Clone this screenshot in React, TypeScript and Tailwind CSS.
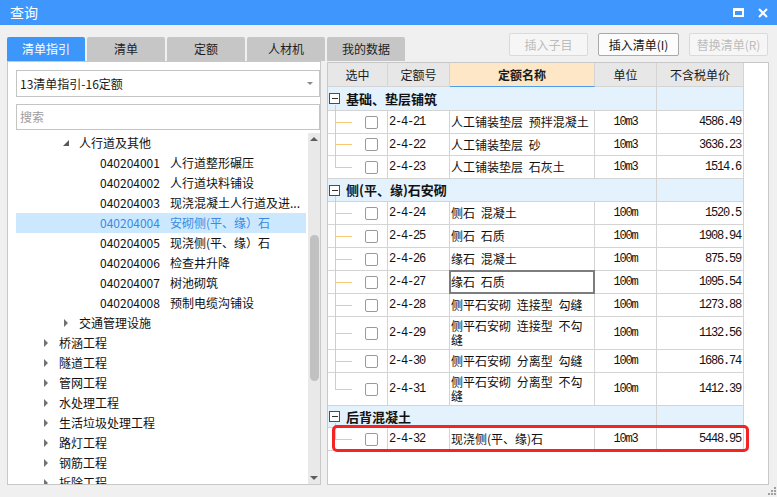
import React from "react";

type TreeItem = {
  lvl: 0 | 1 | 2;
  text: string;
  code?: string;
  open?: boolean;
  selected?: boolean;
};

const treeItems: TreeItem[] = [
  { lvl: 1, text: "人行道及其他", open: true },
  { lvl: 2, code: "040204001", text: "人行道整形碾压" },
  { lvl: 2, code: "040204002", text: "人行道块料铺设" },
  { lvl: 2, code: "040204003", text: "现浇混凝土人行道及进..." },
  { lvl: 2, code: "040204004", text: "安砌侧(平、缘）石", selected: true },
  { lvl: 2, code: "040204005", text: "现浇侧(平、缘）石" },
  { lvl: 2, code: "040204006", text: "检查井升降" },
  { lvl: 2, code: "040204007", text: "树池砌筑" },
  { lvl: 2, code: "040204008", text: "预制电缆沟铺设" },
  { lvl: 1, text: "交通管理设施" },
  { lvl: 0, text: "桥涵工程" },
  { lvl: 0, text: "隧道工程" },
  { lvl: 0, text: "管网工程" },
  { lvl: 0, text: "水处理工程" },
  { lvl: 0, text: "生活垃圾处理工程" },
  { lvl: 0, text: "路灯工程" },
  { lvl: 0, text: "钢筋工程" },
  { lvl: 0, text: "拆除工程" },
];

type Row =
  | { kind: "group"; title: string; h: number }
  | {
      kind: "item";
      code: string;
      name: string;
      unit: string;
      price: string;
      h: number;
      last?: boolean;
      active?: boolean;
    };

const rows: Row[] = [
  { kind: "group", title: "基础、垫层铺筑", h: 24 },
  { kind: "item", code: "2-4-21", name: "人工铺装垫层 预拌混凝土", unit: "10m3", price: "4586.49", h: 23 },
  { kind: "item", code: "2-4-22", name: "人工铺装垫层 砂", unit: "10m3", price: "3636.23", h: 22 },
  { kind: "item", code: "2-4-23", name: "人工铺装垫层 石灰土", unit: "10m3", price: "1514.6", h: 23, last: true },
  { kind: "group", title: "侧(平、缘)石安砌", h: 23 },
  { kind: "item", code: "2-4-24", name: "侧石 混凝土", unit: "100m", price: "1520.5", h: 23 },
  { kind: "item", code: "2-4-25", name: "侧石 石质", unit: "100m", price: "1908.94", h: 23 },
  { kind: "item", code: "2-4-26", name: "缘石 混凝土", unit: "100m", price: "875.59", h: 23 },
  { kind: "item", code: "2-4-27", name: "缘石 石质", unit: "100m", price: "1095.54", h: 23, active: true },
  { kind: "item", code: "2-4-28", name: "侧平石安砌 连接型 勾缝", unit: "100m", price: "1273.88", h: 23 },
  { kind: "item", code: "2-4-29", name: "侧平石安砌 连接型 不勾\n缝", unit: "100m", price: "1132.56", h: 33 },
  { kind: "item", code: "2-4-30", name: "侧平石安砌 分离型 勾缝", unit: "100m", price: "1686.74", h: 23 },
  { kind: "item", code: "2-4-31", name: "侧平石安砌 分离型 不勾\n缝", unit: "100m", price: "1412.39", h: 33, last: true },
  { kind: "group", title: "后背混凝土", h: 22 },
  { kind: "item", code: "2-4-32", name: "现浇侧(平、缘)石", unit: "10m3", price: "5448.95", h: 23, last: true },
];

const H: Record<number, string> = {
  22: "h-[22px]",
  23: "h-[23px]",
  24: "h-[24px]",
  33: "h-[33px]",
};

// where the tree branch meets the row (whole pixels, so the line stays crisp)
const MID_TOP: Record<number, string> = {
  22: "top-[10px]",
  23: "top-[11px]",
  24: "top-[11px]",
  33: "top-[16px]",
};
const MID_H: Record<number, string> = {
  22: "h-[10px]",
  23: "h-[11px]",
  24: "h-[11px]",
  33: "h-[16px]",
};

const cell = "shrink-0 border-r border-b border-[#d4d4d4]";
const mono = "font-['Liberation_Mono',monospace] text-[12px] tracking-[-1.2px]";

function TabButton({ label, active }: { label: string; active?: boolean }) {
  return (
    <div
      className={
        active
          ? "w-[78px] h-[24px] flex items-center justify-center rounded-t-[2px] bg-[#3d96fa] text-white text-[12px]"
          : "w-[78px] h-[24px] flex items-center justify-center rounded-t-[2px] bg-[#c6c6c6] text-[#1e1e1e] text-[12px]"
      }
    >
      {label}
    </div>
  );
}

function ActionButton({ label, width, enabled }: { label: string; width: string; enabled?: boolean }) {
  return (
    <div
      className={
        enabled
          ? `${width} h-[23px] flex items-center justify-center rounded-[2px] border border-[#a9a9a9] bg-[#fcfcfc] text-[12px] text-[#141414]`
          : `${width} h-[23px] flex items-center justify-center rounded-[2px] border border-[#dadada] bg-[#f6f6f6] text-[12px] text-[#bcbcbc]`
      }
    >
      {label}
    </div>
  );
}

function TreeRow({ item }: { item: TreeItem }) {
  const pad = item.lvl === 0 ? "pl-[27px]" : item.lvl === 1 ? "pl-[47px]" : "pl-[84px]";
  return (
    <div
      className={`h-[20px] flex items-center shrink-0 whitespace-nowrap text-[12px] ${pad} ${
        item.selected ? "bg-[#cce8ff] text-[#3a8ae2]" : "text-[#111]"
      }`}
    >
      {item.lvl < 2 && (
        <span className="w-[16px] flex items-center">
          {item.open ? (
            <span className="block w-0 h-0 border-b-[6px] border-b-[#595959] border-l-[6px] border-l-transparent" />
          ) : (
            <span className="block w-0 h-0 border-y-[4px] border-y-transparent border-l-[4px] border-l-[#727272] ml-[1px]" />
          )}
        </span>
      )}
      {item.code && <span className="w-[70px]">{item.code}</span>}
      <span>{item.text}</span>
    </div>
  );
}

function LeftPanel() {
  return (
    <div className="w-[314px] h-[424px] border border-[#c8c8c8] bg-white flex flex-col shrink-0">
      <div className="ml-[8px] mt-[8px] w-[304px] h-[27px] border border-[#c4c4c4] flex items-center justify-between pl-[3px] pr-[6px] text-[12px] text-[#1a1a1a]">
        <span>13清单指引-16定额</span>
        <span className="block w-0 h-0 border-x-[3px] border-x-transparent border-t-[3px] border-t-[#8a8a8a]" />
      </div>
      <div className="ml-[8px] mt-[7px] w-[304px] h-[26px] border border-[#c4c4c4] flex items-center pl-[3px] text-[12px] text-[#9c9c9c]">
        搜索
      </div>
      <div className="flex flex-1 mt-[3px] overflow-hidden">
        <div className="ml-[8px] w-[290px] flex flex-col overflow-hidden">
          {treeItems.map((it, i) => (
            <TreeRow key={i} item={it} />
          ))}
        </div>
        <div className="ml-[2px] w-[12px] bg-[#e9e9e9] flex flex-col items-center">
          <span className="mt-[4px] block w-0 h-0 border-x-[4px] border-x-transparent border-b-[4px] border-b-[#5c5c5c]" />
          <div className="mt-[94px] w-[9px] h-[146px] rounded-full bg-[#c1c1c1]" />
          <div className="flex-1" />
          <span className="mb-[4px] block w-0 h-0 border-x-[4px] border-x-transparent border-t-[4px] border-t-[#5c5c5c]" />
        </div>
      </div>
    </div>
  );
}

function GroupRow({ title, h }: { title: string; h: number }) {
  return (
    <div className={`flex ${H[h]}`}>
      <div className={`${cell} w-[329px] bg-[#e4f2fd] relative flex items-center`}>
        <div className="absolute left-[7px] top-[calc(50%+6px)] bottom-[-1px] w-px bg-[#fbc872]" />
        <div className="ml-[1px] w-[11px] h-[11px] border border-[#4d4d4d] bg-white flex items-center justify-center">
          <div className="w-[6px] h-px bg-[#333]" />
        </div>
        <span className="ml-[6px] text-[13px] font-bold text-[#111]">{title}</span>
      </div>
      <div className={`${cell} w-[87px] bg-[#e4f2fd]`} />
    </div>
  );
}

function ItemRow({ r }: { r: Extract<Row, { kind: "item" }> }) {
  return (
    <div className={`flex ${H[r.h]}`}>
      <div className={`${cell} w-[60px] relative flex items-center`}>
        <div
          className={
            r.last
              ? `absolute left-[7px] top-0 w-px bg-[#fbc872] ${MID_H[r.h]}`
              : "absolute left-[7px] top-0 bottom-[-1px] w-px bg-[#fbc872]"
          }
        />
        <div className={`absolute left-[7px] w-[17px] h-px bg-[#fbc872] ${MID_TOP[r.h]}`} />
        <div className="ml-[37px] w-[13px] h-[13px] rounded-[2px] border border-[#9a9a9a] bg-white" />
      </div>
      <div className={`${cell} w-[62px] flex items-center pl-[1px] text-[#111] ${mono}`}>{r.code}</div>
      <div
        className={`${cell} w-[145px] relative flex items-center pl-[1px] text-[12px] leading-[14px] text-[#111] whitespace-pre-line [word-spacing:3px]`}
      >
        {r.name}
        {r.active && (
          <div className="absolute -left-px -top-px right-[-1px] bottom-[-1px] border-2 border-[#7d7d7d]" />
        )}
      </div>
      <div className={`${cell} w-[62px] flex items-center justify-center text-[#111] ${mono}`}>{r.unit}</div>
      <div className={`${cell} w-[87px] flex items-center justify-end pr-[2px] text-[#111] ${mono}`}>{r.price}</div>
    </div>
  );
}

function QuotaTable() {
  return (
    <div className="mt-[1px] w-[442px] h-[423px] border border-[#c8c8c8] bg-white relative shrink-0">
      <div className="flex h-[24px] text-[12px] text-[#1a1a1a]">
        <div className={`${cell} w-[60px] bg-[#e7e7e7] flex items-center justify-center`}>选中</div>
        <div className={`${cell} w-[62px] bg-[#e7e7e7] flex items-center justify-center`}>定额号</div>
        <div className="shrink-0 border-r border-b border-r-[#d4d4d4] border-b-[#4b9cf0] w-[145px] bg-[#fde7c6] flex items-center justify-center font-bold">
          定额名称
        </div>
        <div className={`${cell} w-[62px] bg-[#e7e7e7] flex items-center justify-center`}>单位</div>
        <div className={`${cell} w-[87px] bg-[#e7e7e7] flex items-center justify-center`}>不含税单价</div>
      </div>
      {rows.map((r, i) =>
        r.kind === "group" ? <GroupRow key={i} title={r.title} h={r.h} /> : <ItemRow key={i} r={r} />
      )}
      <div className="absolute left-[4px] top-[362px] w-[417px] h-[27px] border-[3px] border-[#f32424] rounded-[5px]" />
    </div>
  );
}

export default function App() {
  return (
    <div className="w-[777px] h-[497px] bg-[#f0f0f0] flex flex-col overflow-hidden font-['Noto_Sans_CJK_SC',sans-serif]">
      <div className="h-[25px] bg-[#3f97fd] flex items-center justify-between pl-[10px] pr-[9px] shrink-0">
        <span className="text-[14px] text-white">查询</span>
        <div className="flex items-center gap-[14px]">
          <div className="w-[11px] h-[9px] border-2 border-t-[3px] border-white" />
          <svg width="10" height="10" viewBox="0 0 10 10">
            <path d="M1 1 L9 9 M9 1 L1 9" stroke="white" strokeWidth="2" />
          </svg>
        </div>
      </div>

      <div className="h-[36px] flex pl-[7px] pr-[9px] shrink-0">
        <div className="flex items-end gap-[2px]">
          <TabButton label="清单指引" active />
          <TabButton label="清单" />
          <TabButton label="定额" />
          <TabButton label="人材机" />
          <TabButton label="我的数据" />
        </div>
        <div className="flex-1" />
        <div className="flex items-start gap-[10px] pt-[8px]">
          <ActionButton label="插入子目" width="w-[79px]" />
          <ActionButton label="插入清单(I)" width="w-[81px]" enabled />
          <ActionButton label="替换清单(R)" width="w-[79px]" />
        </div>
      </div>

      <div className="flex pl-[7px] gap-[6px]">
        <LeftPanel />
        <QuotaTable />
      </div>

      <div className="flex-1 flex justify-end items-end pr-[1px] pb-[2px]">
        <svg width="8" height="8" viewBox="0 0 8 8">
          <rect x="6" y="0" width="2" height="2" fill="#a0a0a0" />
          <rect x="6" y="3" width="2" height="2" fill="#a0a0a0" />
          <rect x="3" y="3" width="2" height="2" fill="#a0a0a0" />
          <rect x="6" y="6" width="2" height="2" fill="#a0a0a0" />
          <rect x="3" y="6" width="2" height="2" fill="#a0a0a0" />
          <rect x="0" y="6" width="2" height="2" fill="#a0a0a0" />
        </svg>
      </div>
    </div>
  );
}
